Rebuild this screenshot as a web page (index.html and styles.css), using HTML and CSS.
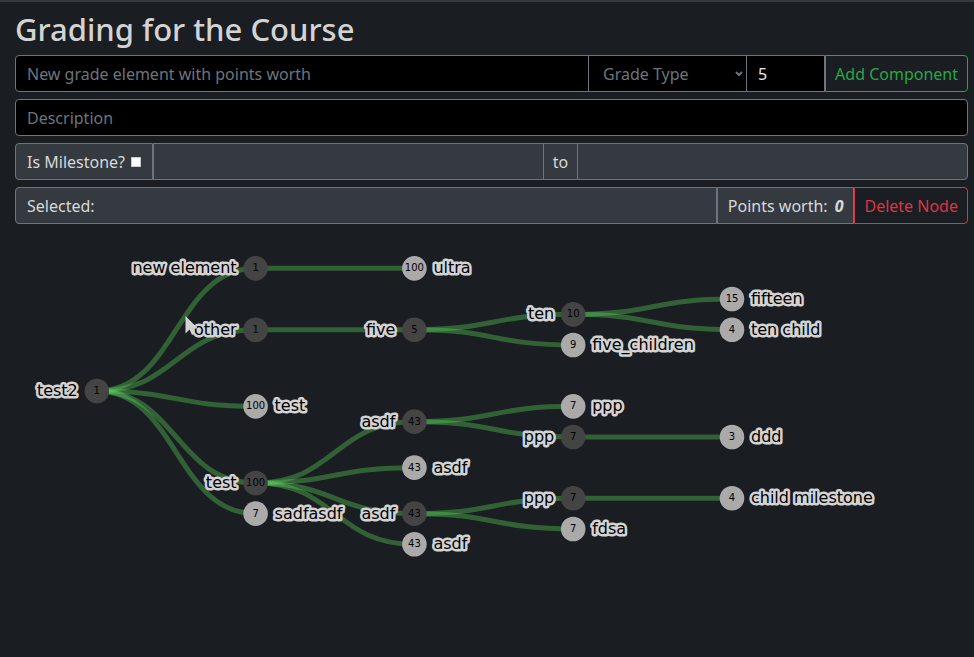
FILE: index.html
```html
<!DOCTYPE html>
<html lang="en">
<head>
<meta charset="utf-8">
<title>Grading for the Course</title>
<link rel="stylesheet" href="styles.css">
</head>
<body>
<main class="page">
  <h1 class="title">Grading for the Course</h1>
  <form class="rows">
    <div class="group">
      <input class="field name" type="text" placeholder="New grade element with points worth" aria-label="Grade element name">
      <span class="picker">
        <select class="field type" aria-label="Grade type"><option>Grade Type</option></select>
        <svg class="chevron" viewBox="0 0 8 6" aria-hidden="true"><path d="M1 1L4 4L7 1"/></svg>
      </span>
      <input class="field points" type="text" inputmode="numeric" value="5" aria-label="Points">
      <button class="btn add" type="button">Add Component</button>
    </div>
    <div class="group">
      <input class="field description" type="text" placeholder="Description" aria-label="Description">
    </div>
    <div class="group milestone">
      <label class="addon check">Is Milestone? <input type="checkbox"></label>
      <input class="field date" type="text" disabled aria-label="Start date">
      <span class="addon to">to</span>
      <input class="field date" type="text" disabled aria-label="End date">
    </div>
    <div class="group selected">
      <span class="addon grow">Selected:</span>
      <span class="addon worth">Points worth: <b>0</b></span>
      <button class="btn delete" type="button">Delete Node</button>
    </div>
  </form>
</main>
<svg class="tree" role="img" aria-label="Grade tree">
  <g id="tree" transform="translate(96.8 159)"></g>
  <path class="pointer" d="M185.500 84V101.500L189.500 97.500L192 103L195 101.500L192.500 96.500H198Z"/>
</svg>
<script src="tree.js"></script>
</body>
</html>
```
FILE: styles.css
```css
* { box-sizing: border-box; }

body {
  margin: 0;
  min-height: 100vh;
  border-top: 2px solid #343a40;
  background: #1a1d21;
  color: #d8d8d8;
  font: 16px/24px "Noto Sans", sans-serif;
}

.page { padding: 8px 6px 0 15px; }

.title {
  margin: 0 0 7px;
  font-size: 31px;
  line-height: 38px;
  font-weight: 500;
  color: #d3d3d3;
}

.rows { display: grid; gap: 7px; }

.group { display: flex; height: 37px; }

.field, .addon, .btn {
  min-width: 0;
  margin: 0;
  padding: 0 11px;
  border: 1px solid #6c757d;
  border-radius: 0;
  font: inherit;
}

.group > :first-child { border-radius: 4px 0 0 4px; }
.group > :last-child { border-radius: 0 4px 4px 0; }
.group > :only-child { border-radius: 4px; }
.picker, .points, .to, .to + .field { margin-left: -1px; }

.field { background: #000; color: #e8e8e8; }
.field::placeholder { color: #6c757d; opacity: 1; }
.field:disabled { background: #343a40; }
.name, .description, .date, .grow { flex: 1; }

.picker { position: relative; display: flex; width: 159px; }
.type {
  appearance: none;
  width: 100%;
  padding: 0 14px;
  color: #6c757d;
}
.chevron {
  position: absolute;
  top: 16px;
  right: 4px;
  width: 8px;
  height: 6px;
  fill: none;
  stroke: #6c757d;
  stroke-width: 2;
  pointer-events: none;
}
.points { width: 79px; }

.addon {
  display: flex;
  align-items: center;
  background: #343a40;
  white-space: nowrap;
}
.check { gap: 6px; padding-right: 10px; }
.check input {
  appearance: none;
  width: 10px;
  height: 10px;
  margin: 0 1px 0 0;
  border: 1px solid #c8c8c8;
  background: #fff;
}
.to { padding: 0 9px; }
.worth { gap: 7px; padding: 0 10px; }
.worth b { font-style: italic; }

.btn { padding: 0 9px; background: transparent; white-space: nowrap; }
.add { border-color: #28a745; color: #28a745; }
.delete { border-color: #dc3545; color: #dc3545; }

.tree {
  display: block;
  width: 100%;
  height: 400px;
  margin-top: 8px;
  font-family: "DejaVu Sans", sans-serif;
}
.link { fill: none; stroke: #5bd75c; stroke-opacity: 0.37; stroke-width: 5; }
.leaf { fill: #aaa; }
.parent { fill: #444; }
.value { font-size: 10px; text-anchor: middle; fill: #000; }
.label {
  font-size: 16px;
  fill: #000;
  stroke: #d3d3d3;
  stroke-width: 5;
  stroke-linejoin: round;
  paint-order: stroke;
}
.before { text-anchor: end; }
.pointer { fill: #d3d3d3; }
```
FILE: tree.js
```js
const column = 158.8;
const row = 15.33;
// name, value, depth, row offset from the root, index of the parent
const nodes = [
  ["test2", 1, 0, 0, -1],
  ["new element", 1, 1, -8, 0],
  ["other", 1, 1, -4, 0],
  ["test", 100, 1, 1, 0],
  ["test", 100, 1, 6, 0],
  ["sadfasdf", 7, 1, 8, 0],
  ["ultra", 100, 2, -8, 1],
  ["five", 5, 2, -4, 2],
  ["asdf", 43, 2, 2, 4],
  ["asdf", 43, 2, 5, 4],
  ["asdf", 43, 2, 8, 4],
  ["asdf", 43, 2, 10, 4],
  ["ten", 10, 3, -5, 7],
  ["five_children", 9, 3, -3, 7],
  ["ppp", 7, 3, 1, 8],
  ["ppp", 7, 3, 3, 8],
  ["ppp", 7, 3, 7, 10],
  ["fdsa", 7, 3, 9, 10],
  ["fifteen", 15, 4, -6, 12],
  ["ten child", 4, 4, -4, 12],
  ["ddd", 3, 4, 3, 15],
  ["child milestone", 4, 4, 7, 16]
];
const tree = document.getElementById("tree");

function add(tag, attributes, text) {
  const element = document.createElementNS("http://www.w3.org/2000/svg", tag);
  for (const key in attributes) element.setAttribute(key, attributes[key]);
  if (text !== undefined) element.textContent = text;
  tree.appendChild(element);
}

for (const [, , depth, offset, parent] of nodes) {
  if (parent < 0) continue;
  const x = depth * column, y = offset * row;
  const px = nodes[parent][2] * column, py = nodes[parent][3] * row;
  const mid = (x + px) / 2;
  add("path", { class: "link", d: `M${px},${py}C${mid},${py} ${mid},${y} ${x},${y}` });
}
nodes.forEach(([name, value, depth, offset], index) => {
  const x = depth * column, y = offset * row;
  const isParent = nodes.some(node => node[4] === index);
  add("circle", { class: isParent ? "parent" : "leaf", cx: x, cy: y, r: 12.3 });
  add("text", { class: "value", x, y: y + 3 }, value);
  add("text", { class: isParent ? "label before" : "label", x: x + (isParent ? -19 : 19), y: y + 5 }, name);
});
```
